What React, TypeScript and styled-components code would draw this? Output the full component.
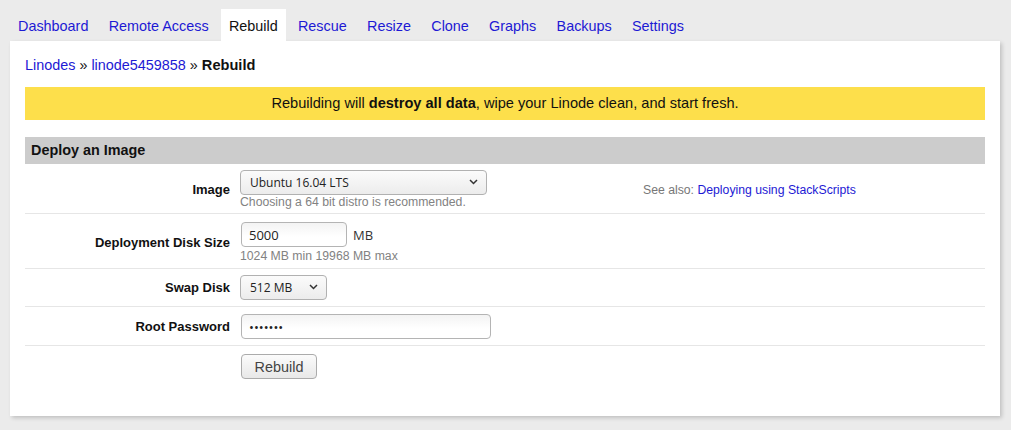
import React from "react";
import styled, { createGlobalStyle } from "styled-components";

const GlobalStyle = createGlobalStyle`
  html, body {
    margin: 0;
    padding: 0;
    background: #ebebeb;
  }
  body {
    font-family: "Liberation Sans", Arial, sans-serif;
    font-size: 14.4px;
    color: #111;
  }
`;

const Page = styled.div`
  padding: 9px 11px 14px 10px;
`;

const Tabs = styled.nav`
  display: flex;
  gap: 4.25px;
`;

const Tab = styled.a<{ $active?: boolean }>`
  display: block;
  padding: 3px 8px 0;
  line-height: 29px;
  font-size: 14.4px;
  text-decoration: none;
  color: ${(p) => (p.$active ? "#111" : "#1d19d4")};
  background: ${(p) => (p.$active ? "#fff" : "transparent")};
  cursor: pointer;
`;

const Panel = styled.main`
  background: #fff;
  padding: 15px 15px 30px;
  box-shadow: 2px 2px 4px rgba(0, 0, 0, 0.18);
`;

const Crumbs = styled.div`
  line-height: 18px;
  font-size: 14.4px;
  margin-bottom: 13px;
  color: #111;
`;

const Link = styled.a`
  color: #1d19d4;
  text-decoration: none;
`;

const Current = styled.strong`
  font-size: 14.6px;
`;

const Banner = styled.div`
  background: #fddf4b;
  line-height: 33px;
  text-align: center;
  font-size: 14.6px;
  color: #111;
  margin-bottom: 17px;
`;

const SectionHeader = styled.h2`
  margin: 0;
  background: #cccccc;
  line-height: 27px;
  padding: 0 6px;
  font-size: 14.4px;
  font-weight: bold;
  color: #111;
`;

const Row = styled.div<{ $pt: number; $pb: number; $last?: boolean }>`
  display: grid;
  grid-template-columns: 210px 403px 1fr;
  align-items: center;
  padding: ${(p) => `${p.$pt}px 0 ${p.$pb}px`};
  border-bottom: ${(p) => (p.$last ? "none" : "1px solid #e6e6e6")};
`;

const Label = styled.label`
  text-align: right;
  padding-right: 5px;
  font-weight: bold;
  font-size: 13px;
  color: #111;
`;

const Field = styled.div`
  padding-left: 5px;
  display: flex;
  flex-direction: column;
  align-items: flex-start;
`;

const Inline = styled.div`
  display: flex;
  align-items: center;
`;

const Aside = styled.div`
  padding-left: 5px;
  font-size: 12.24px;
  color: #777;
`;

const SmallLink = styled.a`
  color: #1d19d4;
  text-decoration: none;
`;

const Hint = styled.div<{ $mt?: number }>`
  font-size: 12.24px;
  line-height: 14px;
  color: #828282;
  margin-top: ${(p) => p.$mt ?? 0}px;
`;

const SelectWrap = styled.div<{ $w: number }>`
  position: relative;
  width: ${(p) => p.$w}px;
  height: 25px;
`;

const Select = styled.select`
  appearance: none;
  -webkit-appearance: none;
  box-sizing: border-box;
  width: 100%;
  height: 25px;
  margin: 0;
  padding: 0 24px 0 9px;
  border: 1px solid #b1b1b1;
  border-radius: 4px;
  background: linear-gradient(#fbfbfb, #ececec);
  font-family: "Open Sans", "Noto Sans", sans-serif;
  font-size: 12px;
  color: #222;
  outline: none;
`;

const Chevron = styled.svg`
  position: absolute;
  right: 9px;
  top: 9px;
  pointer-events: none;
`;

const TextInput = styled.input<{ $w: number }>`
  box-sizing: border-box;
  width: ${(p) => p.$w}px;
  height: 25px;
  margin: 0 0 0 1px;
  padding: 0 7px;
  border: 1px solid #b4b4b4;
  border-radius: 4px;
  background: linear-gradient(#f3f3f3, #ffffff 60%);
  font-family: "Open Sans", "Noto Sans", sans-serif;
  font-size: 13px;
  color: #222;
  outline: none;
`;

const Unit = styled.span`
  margin-left: 6px;
  font-family: "Open Sans", "Noto Sans", sans-serif;
  font-size: 13px;
  color: #333;
`;

const Button = styled.button`
  box-sizing: border-box;
  width: 76px;
  height: 25px;
  margin: 0 0 0 1px;
  padding: 0;
  border: 1px solid #ababab;
  border-radius: 4px;
  background: linear-gradient(#fbfbfb, #e8e8e8);
  font-family: "Liberation Sans", Arial, sans-serif;
  font-size: 14.4px;
  color: #444;
  cursor: pointer;
`;

const DropSelect: React.FC<{ width: number; value: string }> = ({ width, value }) => (
  <SelectWrap $w={width}>
    <Select defaultValue={value}>
      <option>{value}</option>
    </Select>
    <Chevron width="9" height="6" viewBox="0 0 9 6">
      <path d="M1 1l3.5 3.5L8 1" fill="none" stroke="#333" strokeWidth="1.5" />
    </Chevron>
  </SelectWrap>
);

const tabs = [
  "Dashboard",
  "Remote Access",
  "Rebuild",
  "Rescue",
  "Resize",
  "Clone",
  "Graphs",
  "Backups",
  "Settings",
];

export default function App() {
  return (
    <>
      <GlobalStyle />
      <Page>
        <Tabs>
          {tabs.map((t) => (
            <Tab key={t} $active={t === "Rebuild"}>
              {t}
            </Tab>
          ))}
        </Tabs>
        <Panel>
          <Crumbs>
            <Link>Linodes</Link> » <Link>linode5459858</Link> » <Current>Rebuild</Current>
          </Crumbs>
          <Banner>
            Rebuilding will <b>destroy all data</b>, wipe your Linode clean, and start fresh.
          </Banner>
          <SectionHeader>Deploy an Image</SectionHeader>

          <Row $pt={6} $pb={4}>
            <Label>Image</Label>
            <Field>
              <DropSelect width={247} value="Ubuntu 16.04 LTS" />
              <Hint>Choosing a 64 bit distro is recommended.</Hint>
            </Field>
            <Aside>
              See also: <SmallLink>Deploying using StackScripts</SmallLink>
            </Aside>
          </Row>

          <Row $pt={8} $pb={5}>
            <Label>Deployment Disk Size</Label>
            <Field>
              <Inline>
                <TextInput $w={106} defaultValue="5000" />
                <Unit>MB</Unit>
              </Inline>
              <Hint $mt={2}>1024 MB min 19968 MB max</Hint>
            </Field>
            <div />
          </Row>

          <Row $pt={6} $pb={6}>
            <Label>Swap Disk</Label>
            <Field>
              <DropSelect width={87} value="512 MB" />
            </Field>
            <div />
          </Row>

          <Row $pt={7} $pb={6}>
            <Label>Root Password</Label>
            <Field>
              <TextInput $w={250} type="password" defaultValue="1234567" />
            </Field>
            <div />
          </Row>

          <Row $pt={8} $pb={7} $last>
            <div />
            <Field>
              <Button>Rebuild</Button>
            </Field>
            <div />
          </Row>
        </Panel>
      </Page>
    </>
  );
}
